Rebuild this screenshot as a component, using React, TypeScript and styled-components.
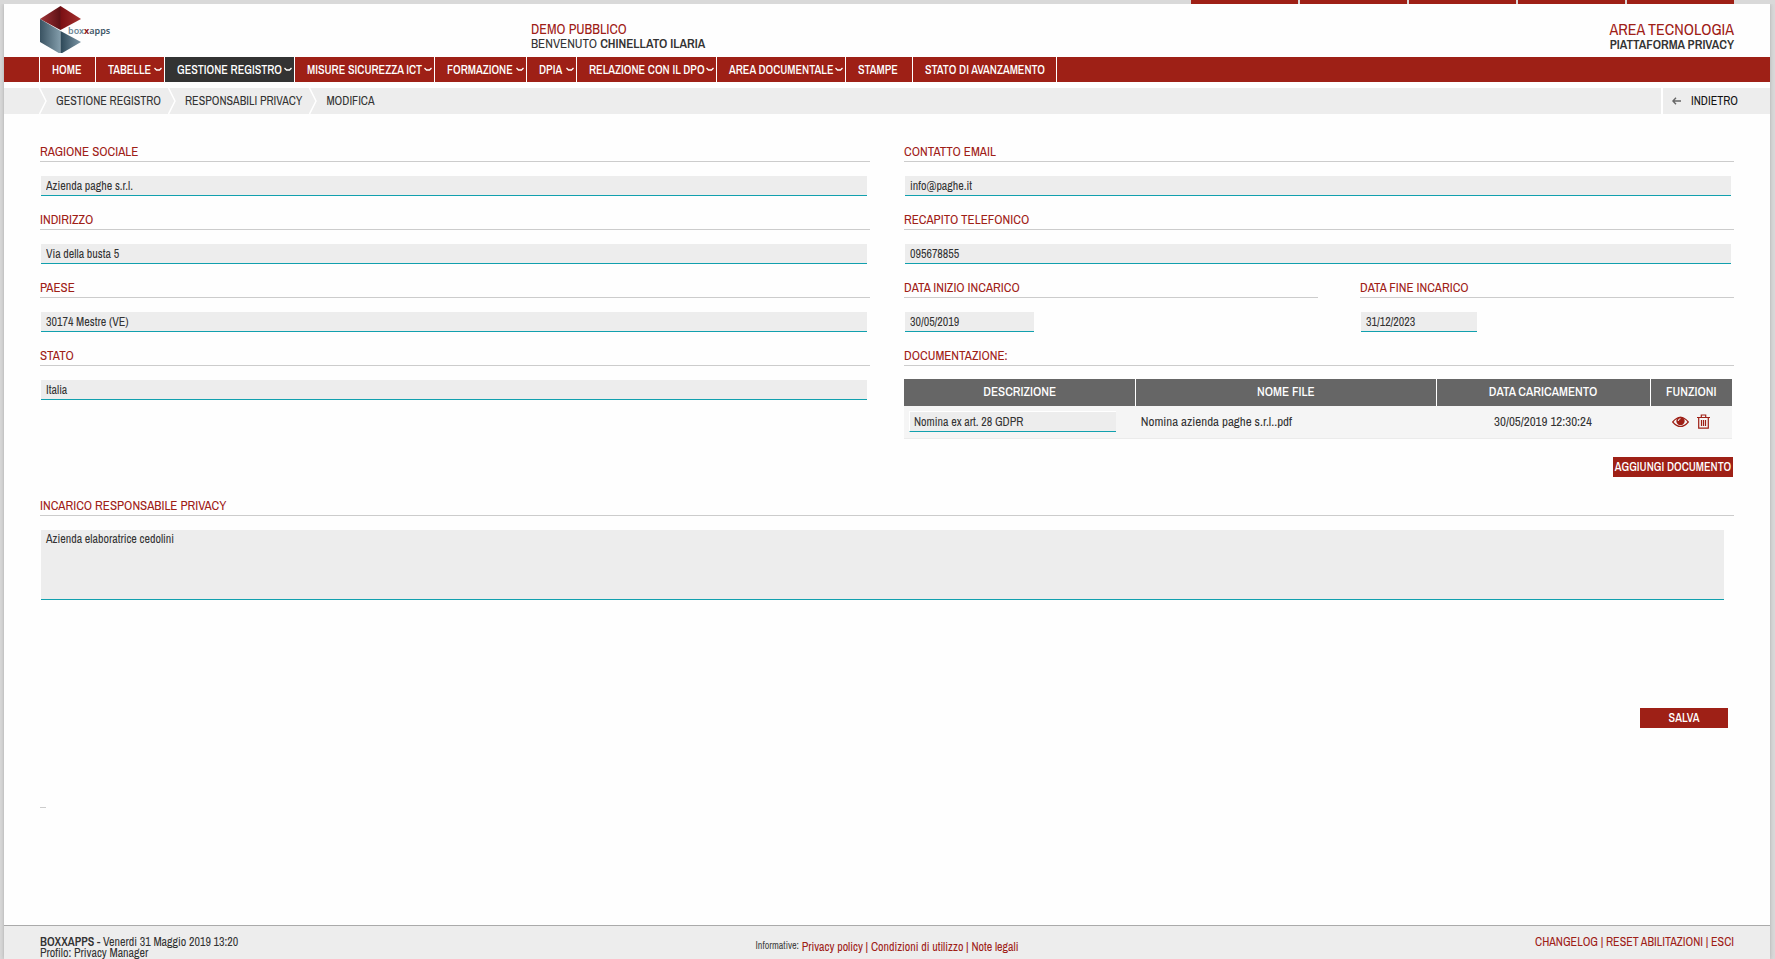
import React from 'react';
import styled, { createGlobalStyle } from 'styled-components';

const red = '#9e2016';
const grey = '#ededed';
const font = '"Archivo Narrow", "Arial Narrow", "Liberation Sans", sans-serif';

const Global = createGlobalStyle`
  * { box-sizing: border-box; }
  html { background: #d9d9d9; }
  body { margin: 0; font: 13px/16px ${font}; color: #333; }
  input, textarea, button { font-family: inherit; border-radius: 0; }
  a { color: inherit; text-decoration: none; }
  b { font-weight: 600; }
`;

const Shell = styled.div`
  display: flex;
  flex-direction: column;
  min-height: 100vh;
  padding: 0 5px 0 4px;
`;

const TopTabs = styled.div`
  display: flex;
  justify-content: flex-end;
  gap: 2px;
  height: 4px;
  padding-right: 36px;
`;

const TopTab = styled.span`
  width: 107px;
  background: ${red};
`;

const Page = styled.div`
  flex: 1;
  display: flex;
  flex-direction: column;
  background: #fefefe;
  box-shadow: 0 0 4px #aaa;
  clip-path: inset(0 -5px);
`;

const Header = styled.header`
  display: grid;
  grid-template-columns: 491px 1fr auto;
  height: 53px;
  padding: 0 36px;
`;

const HeaderBlock = styled.div<{ $right?: boolean }>`
  padding-top: 17px;
  font-size: 13px;
  line-height: 14px;
  text-align: ${p => (p.$right ? 'right' : 'left')};
`;

const HeaderTitle = styled.div<{ $large?: boolean }>`
  color: ${red};
  font-size: ${p => (p.$large ? 16 : 14)}px;
  line-height: ${p => (p.$large ? 17 : 16)}px;
`;

const Nav = styled.nav`
  display: flex;
  height: 25px;
  padding-left: 35px;
  background: ${red};
`;

const NavLink = styled.a<{ $active?: boolean; $width: number }>`
  display: flex;
  align-items: center;
  justify-content: space-between;
  width: ${p => p.$width}px;
  padding: 0 2px 0 12px;
  border-left: 1px solid #fff;
  background: ${p => (p.$active ? '#333' : 'transparent')};
  color: #fff;
  font-size: 12px;
  font-weight: 500;
  white-space: nowrap;
  &:last-child { border-right: 1px solid #fff; }
`;

const Crumbs = styled.div`
  display: flex;
  height: 26px;
  margin-top: 6px;
  padding-left: 35px;
  background: ${grey};
  font-size: 12px;
  line-height: 26px;
`;

const Crumb = styled.a`
  display: flex;
  gap: 9px;
  margin-right: 7px;
`;

const Back = styled.a`
  display: flex;
  align-items: center;
  gap: 10px;
  margin-left: auto;
  padding: 0 32px 0 9px;
  border-left: 2px solid #fff;
  color: #111;
`;

const Main = styled.main`
  flex: 1;
  padding: 30px 36px 0;
`;

const Columns = styled.div`
  display: grid;
  grid-template-columns: 1fr 1fr;
  column-gap: 34px;
`;

const FieldBox = styled.div`
  padding-bottom: 16px;
`;

const Label = styled.label`
  display: block;
  height: 18px;
  margin-bottom: 14px;
  border-bottom: 1px solid #ccc;
  color: ${red};
`;

const Title = styled(Label).attrs({ as: 'h2' })`
  margin: 0 0 14px;
  font-size: 13px;
  font-weight: 400;
`;

const Input = styled.input<{ $width?: string }>`
  display: block;
  width: ${p => p.$width ?? 'calc(100% - 4px)'};
  height: 20px;
  margin-left: 1px;
  padding: 0 5px;
  border: 0;
  border-bottom: 1px solid #11a0ae;
  background: ${grey};
  color: #333;
  font-size: 12px;
`;

const Dates = styled.div`
  display: grid;
  grid-template-columns: 414fr 374fr;
  column-gap: 42px;
`;

const Table = styled.table`
  width: calc(100% - 2px);
  margin-top: -1px;
  border-collapse: collapse;
  table-layout: fixed;
`;

const Th = styled.th<{ $width?: string }>`
  width: ${p => p.$width ?? 'auto'};
  height: 27px;
  padding: 0 0 2px;
  background: #666;
  color: #fff;
  font-weight: 500;
  & + & { border-left: 1px solid #fff; }
`;

const Td = styled.td<{ $center?: boolean }>`
  height: 32px;
  padding: 0 5px;
  border-bottom: 1px solid #ebebeb;
  background: #f5f5f5;
  text-align: ${p => (p.$center ? 'center' : 'left')};
`;

const CellInput = styled(Input)`
  height: 21px;
  margin: 0;
  padding: 0 4px;
  border-top: 1px solid #fff;
  border-left: 1px solid #fff;
`;

const Icons = styled.div`
  display: flex;
  align-items: center;
  justify-content: center;
  gap: 8px;
`;

const IconButton = styled.button`
  display: flex;
  padding: 0;
  border: 0;
  background: none;
  color: ${red};
`;

const Actions = styled.div<{ $inset?: number }>`
  display: flex;
  justify-content: flex-end;
  padding-right: ${p => p.$inset ?? 0}px;
`;

const Button = styled.button<{ $width: number }>`
  width: ${p => p.$width}px;
  height: 20px;
  padding: 0;
  border: 0;
  background: ${red};
  color: #fff;
  font-size: 12px;
  font-weight: 500;
  white-space: nowrap;
`;

const AddRow = styled(Actions)`
  padding-top: 18px;
`;

const Notes = styled.section`
  padding-top: 21px;
`;

const TextArea = styled.textarea`
  display: block;
  width: calc(100% - 11px);
  height: 70px;
  margin: 0 0 108px 1px;
  padding: 1px 5px;
  border: 0;
  border-bottom: 1px solid #11a0ae;
  background: ${grey};
  color: #333;
  font-size: 12px;
  line-height: 16px;
  resize: none;
`;

const Dash = styled.hr`
  width: 6px;
  height: 1px;
  margin: 79px 0 0;
  border: 0;
  background: #ccc;
`;

const Footer = styled.footer`
  display: grid;
  grid-template-columns: 1fr auto 1fr;
  height: 34px;
  padding: 0 36px;
  border-top: 1px solid #aaa;
  background: ${grey};
  font-size: 12px;
  line-height: 11px;
`;

const FooterInfo = styled.div`
  padding-top: 11px;
`;

const FooterLegal = styled.div`
  padding-top: 14px;
  color: ${red};
  small { color: #444; font-size: 10px; vertical-align: 2px; }
`;

const FooterLinks = styled.div`
  padding-top: 11px;
  color: ${red};
  text-align: right;
`;

const Logo = () => (
  <svg width="76" height="49" viewBox="0 0 76 49" role="img" aria-label="boxxapps">
    <defs>
      <linearGradient id="roof"><stop stopColor="#a13438" /><stop offset=".48" stopColor="#5f1216" /><stop offset=".52" stopColor="#7c1014" /><stop offset="1" stopColor="#a5302f" /></linearGradient>
      <linearGradient id="wall"><stop stopColor="#3a5362" /><stop offset="1" stopColor="#839dab" /></linearGradient>
      <linearGradient id="side"><stop stopColor="#2c4757" /><stop offset="1" stopColor="#7c96a5" /></linearGradient>
    </defs>
    <path d="M0 15 20.500 2 41 15 20.500 26z" fill="url(#roof)" />
    <path d="M0 15 20.500 27V50L0 38z" fill="url(#wall)" />
    <path d="M20.500 27 41 38 20.500 50z" fill="url(#side)" />
    <text x="28" y="30" fontFamily="Noto Sans, sans-serif" fontSize="9" fontWeight="600" fill="#6f8998">box<tspan fill="#8e191c" fontWeight="700">x</tspan><tspan fill="#3f5868">apps</tspan></text>
  </svg>
);

const Chevron = () => (
  <svg width="8" height="5" viewBox="0 0 8 5" fill="none" stroke="#fff" strokeWidth="1.300" aria-hidden="true"><path d="M.5 1 2.500 3H5.500L7.500 1" /></svg>
);

const CrumbMark = () => (
  <svg width="8" height="26" viewBox="0 0 8 26" fill="none" stroke="#fff" strokeWidth="1.500" aria-hidden="true"><path d="M.5 0 7 13 .5 26" /></svg>
);

const Arrow = () => (
  <svg width="9" height="8" viewBox="0 0 9 8" fill="none" stroke="#666" strokeWidth="1.400" aria-hidden="true"><path d="M9 4H1M4 .8.9 4 4 7.200" /></svg>
);

const Eye = () => (
  <svg width="17" height="12" viewBox="0 0 17 12" aria-hidden="true">
    <path d="M.7 6Q8.500-3.500 16.300 6 8.500 15 .7 6z" fill="none" stroke="currentColor" strokeWidth="1.200" />
    <circle cx="8.500" cy="5" r="4.200" fill="currentColor" />
    <path d="M6.200 5Q6.200 2.800 8.500 2.700" fill="none" stroke="#f5f5f5" />
  </svg>
);

const Trash = () => (
  <svg width="13" height="15" viewBox="0 0 13 15" fill="none" stroke="currentColor" strokeWidth="1.200" aria-hidden="true">
    <path d="M0 3.500H13M4.300 3.300V1H8.700V3.300M1.700 3.500V14.200H11.300V3.500M4.500 6V12M6.500 6V12M8.500 6V12" />
  </svg>
);

const navItems = [
  { text: 'HOME', width: 56 },
  { text: 'TABELLE', width: 69, menu: true },
  { text: 'GESTIONE REGISTRO', width: 130, menu: true, active: true },
  { text: 'MISURE SICUREZZA ICT', width: 140, menu: true },
  { text: 'FORMAZIONE', width: 92, menu: true },
  { text: 'DPIA', width: 50, menu: true },
  { text: 'RELAZIONE CON IL DPO', width: 140, menu: true },
  { text: 'AREA DOCUMENTALE', width: 129, menu: true },
  { text: 'STAMPE', width: 67 },
  { text: 'STATO DI AVANZAMENTO', width: 145 },
];

const Field = ({ id, label, value, width }: { id: string; label: string; value: string; width?: string }) => (
  <FieldBox>
    <Label htmlFor={id}>{label}</Label>
    <Input id={id} defaultValue={value} $width={width} />
  </FieldBox>
);

export default function App() {
  return (
    <>
      <Global />
      <Shell>
        <TopTabs>{[0, 1, 2, 3, 4].map(n => <TopTab key={n} />)}</TopTabs>
        <Page>
          <Header>
            <Logo />
            <HeaderBlock>
              <HeaderTitle>DEMO PUBBLICO</HeaderTitle>
              BENVENUTO <b>CHINELLATO ILARIA</b>
            </HeaderBlock>
            <HeaderBlock $right>
              <HeaderTitle $large>AREA TECNOLOGIA</HeaderTitle>
              <b>PIATTAFORMA PRIVACY</b>
            </HeaderBlock>
          </Header>
          <Nav>
            {navItems.map(item => (
              <NavLink key={item.text} href="#" $active={item.active} $width={item.width}>
                {item.text}{item.menu && <Chevron />}
              </NavLink>
            ))}
          </Nav>
          <Crumbs>
            {['GESTIONE REGISTRO', 'RESPONSABILI PRIVACY', 'MODIFICA'].map(text => (
              <Crumb key={text} href="#"><CrumbMark />{text}</Crumb>
            ))}
            <Back href="#"><Arrow />INDIETRO</Back>
          </Crumbs>
          <Main>
            <Columns>
              <div>
                <Field id="name" label="RAGIONE SOCIALE" value="Azienda paghe s.r.l." />
                <Field id="address" label="INDIRIZZO" value="Via della busta 5" />
                <Field id="town" label="PAESE" value="30174 Mestre (VE)" />
                <Field id="state" label="STATO" value="Italia" />
              </div>
              <div>
                <Field id="email" label="CONTATTO EMAIL" value="info@paghe.it" />
                <Field id="phone" label="RECAPITO TELEFONICO" value="095678855" />
                <Dates>
                  <Field id="start" label="DATA INIZIO INCARICO" value="30/05/2019" width="129px" />
                  <Field id="end" label="DATA FINE INCARICO" value="31/12/2023" width="116px" />
                </Dates>
                <Title>DOCUMENTAZIONE:</Title>
                <Table>
                  <thead>
                    <tr>
                      <Th $width="28%">DESCRIZIONE</Th>
                      <Th>NOME FILE</Th>
                      <Th $width="214px">DATA CARICAMENTO</Th>
                      <Th $width="82px">FUNZIONI</Th>
                    </tr>
                  </thead>
                  <tbody>
                    <tr>
                      <Td><CellInput $width="calc(100% - 15px)" aria-label="Descrizione" defaultValue="Nomina ex art. 28 GDPR" /></Td>
                      <Td>Nomina azienda paghe s.r.l..pdf</Td>
                      <Td $center>30/05/2019 12:30:24</Td>
                      <Td $center>
                        <Icons>
                          <IconButton aria-label="Visualizza"><Eye /></IconButton>
                          <IconButton aria-label="Elimina"><Trash /></IconButton>
                        </Icons>
                      </Td>
                    </tr>
                  </tbody>
                </Table>
                <AddRow $inset={1}><Button $width={120}>AGGIUNGI DOCUMENTO</Button></AddRow>
              </div>
            </Columns>
            <Notes>
              <Label htmlFor="task">INCARICO RESPONSABILE PRIVACY</Label>
              <TextArea id="task" defaultValue="Azienda elaboratrice cedolini" />
            </Notes>
            <Actions $inset={6}><Button $width={88}>SALVA</Button></Actions>
            <Dash />
          </Main>
          <Footer>
            <FooterInfo><b>BOXXAPPS</b> - Venerdi 31 Maggio 2019 13:20<br />Profilo: Privacy Manager</FooterInfo>
            <FooterLegal><small>Informative:</small> <a href="#">Privacy policy</a> | <a href="#">Condizioni di utilizzo</a> | <a href="#">Note legali</a></FooterLegal>
            <FooterLinks><a href="#">CHANGELOG</a> | <a href="#">RESET ABILITAZIONI</a> | <a href="#">ESCI</a></FooterLinks>
          </Footer>
        </Page>
      </Shell>
    </>
  );
}
